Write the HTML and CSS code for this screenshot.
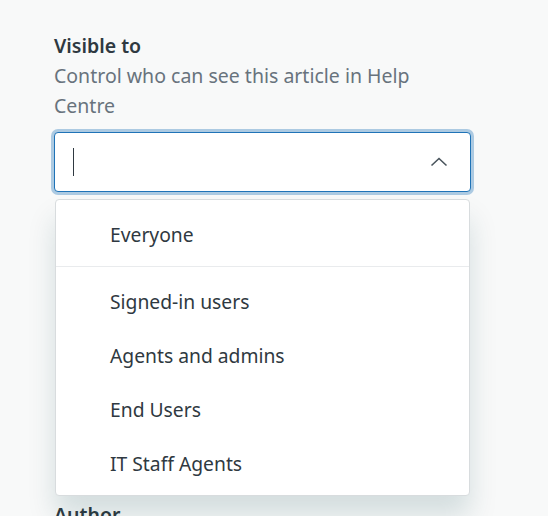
FILE: index.html
```html
<!DOCTYPE html>
<html lang="en">
<head>
    <meta charset="UTF-8">
    <meta name="viewport" content="width=device-width, initial-scale=1.0">
    <title>Visible to</title>
    <link rel="stylesheet" href="styles.css">
</head>
<body>
    <div class="panel">
        <div class="field">
            <label class="field-label" for="visible">Visible to</label>
            <p class="field-hint">Control who can see this article in Help Centre</p>

            <div class="combo">
                <div class="combo-input" id="visible">
                    <span class="caret"></span>
                    <svg class="chevron" width="18" height="10" viewBox="0 0 18 10">
                        <path d="M1.5 8.5 L9 1.5 L16.5 8.5" fill="none" stroke="#49545c" stroke-width="1.6"/>
                    </svg>
                </div>

                <ul class="menu">
                    <li class="menu-item">Everyone</li>
                    <li class="menu-sep"></li>
                    <li class="menu-item">Signed-in users</li>
                    <li class="menu-item">Agents and admins</li>
                    <li class="menu-item">End Users</li>
                    <li class="menu-item">IT Staff Agents</li>
                </ul>
            </div>
        </div>

        <div class="field">
            <label class="field-label">Author</label>
        </div>
    </div>
</body>
</html>
```

FILE: styles.css
```css
html, body {
    height: 100%;
    overflow: hidden;
}
body {
    font-family: "Noto Sans", "Open Sans", sans-serif;
    margin: 0;
    padding: 0;
    background-color: #f8f9f9;
    color: #2f3941;
}
.panel {
    padding: 31px 54px 0 54px;
    width: 417px;
}
.field {
    margin-bottom: 308px;
}
.field-label {
    display: block;
    font-size: 19.5px;
    font-weight: 600;
    line-height: 30px;
}
.field-hint {
    margin: 0;
    font-size: 19.5px;
    line-height: 30px;
    color: #68737d;
}
.combo {
    position: relative;
    margin-top: 11px;
}
.combo-input {
    display: flex;
    align-items: center;
    justify-content: space-between;
    height: 58px;
    padding: 0 22px 0 18px;
    background-color: #fff;
    border: 1px solid #1f73b7;
    border-radius: 4px;
    box-shadow: 0 0 0 3px rgba(31, 115, 183, 0.35);
}
.caret {
    width: 1px;
    height: 28px;
    background-color: #2f3941;
}
.menu {
    position: absolute;
    top: 67px;
    left: 1px;
    right: 1px;
    margin: 0;
    padding: 8px 0 4px 0;
    list-style: none;
    background-color: #fff;
    border: 1px solid #d8dcde;
    border-radius: 4px;
    box-shadow: 0 20px 28px rgba(4, 68, 77, 0.15);
}
.menu-item {
    height: 54px;
    line-height: 54px;
    padding-left: 54px;
    font-size: 19.3px;
    color: #2f3941;
}
.menu-sep {
    height: 1px;
    margin: 4px 0 8px 0;
    background-color: #e9ebed;
}
```
